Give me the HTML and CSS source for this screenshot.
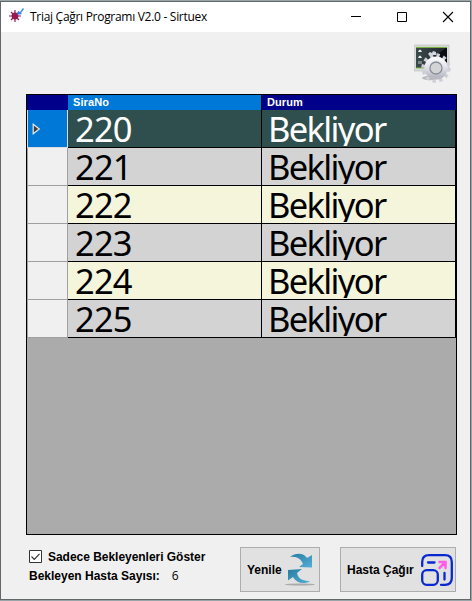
FILE: index.html
```html
<!DOCTYPE html>
<html lang="tr">
<head>
<meta charset="utf-8">
<title>Triaj Çağrı Programı V2.0 - Sirtuex</title>
<link rel="stylesheet" href="styles.css">
</head>
<body>
<main class="window">
  <header class="titlebar">
    <svg class="app-icon" width="16" height="16" viewBox="0 0 16 16">
      <g stroke="#9b174f" stroke-width="1.2"><path d="M6 3v12M0 9h12M2 5l8 8M2 13l8-8"/></g>
      <circle cx="6" cy="9" r="3.4" fill="#9b174f"/>
      <path d="M8 8l1-4 2 1 3-4 1 1-3 4 1 1z" fill="#2e8be8"/>
    </svg>
    <span class="title">Triaj Çağrı Programı V2.0 - Sirtuex</span>
    <div class="controls">
      <svg width="12" height="12" viewBox="0 0 12 12"><path d="M1 5.5h10" stroke="#000"/></svg>
      <svg width="12" height="12" viewBox="0 0 12 12"><path d="M1.5 1.5h9v9h-9z" fill="none" stroke="#000"/></svg>
      <svg width="12" height="12" viewBox="0 0 12 12"><path d="M1 1l10 10M11 1L1 11" stroke="#000" stroke-width="1.1"/></svg>
    </div>
  </header>
  <div class="toolbar">
    <svg width="40" height="40" viewBox="0 0 40 40">
      <defs>
        <linearGradient id="metal" x1="0" y1="0" x2="0" y2="1"><stop offset="0" stop-color="#f8f8fb"/><stop offset=".55" stop-color="#dcdce4"/><stop offset="1" stop-color="#b9b9c4"/></linearGradient>
        <linearGradient id="screen" x1="0" y1="0" x2="1" y2="0"><stop offset="0" stop-color="#3b4a4b"/><stop offset="1" stop-color="#20262e"/></linearGradient>
      </defs>
      <ellipse cx="16" cy="34" rx="8" ry="2.2" fill="#b9b9b9"/>
      <path d="M0 1h35v26H0z" fill="#d9dadb" stroke="#bfc1c3" stroke-width=".7"/>
      <path d="M2 3h31v21H2z" fill="url(#screen)"/>
      <path d="M33 3v19L20 13z" fill="#080d12"/>
      <path d="M2 3.4h31M2 24h31" stroke="#83bd45"/>
      <path d="M4 8q2-5 4 0zM4 14q2-5 4 0z" fill="#eee"/><path d="M4 17h4v3H4z" fill="#7d8687"/>
      <path d="M14 10l2-2 2 1 1-2 3 1v3h-7z" fill="#d4d8dd"/>
      <circle cx="22" cy="24" r="6" fill="#d2d4d6"/>
      <circle cx="22" cy="24" r="12.7" fill="none" stroke="#cfcfd8" stroke-width="4" stroke-dasharray="3.3 3.35"/>
      <circle cx="22" cy="24" r="8.7" fill="none" stroke="url(#metal)" stroke-width="5.8"/>
      <circle cx="22" cy="24" r="6" fill="none" stroke="#8b8f99" stroke-width="1.3"/>
    </svg>
  </div>
  <section class="grid">
    <div class="row head"><span class="corner"></span><span class="sorted">SiraNo</span><span>Durum</span></div>
    <div class="row selected"><span class="handle"><svg width="9" height="12" viewBox="0 0 9 12"><path d="M1.2 1.2v9.6L7.3 6z" fill="#404040" stroke="#e8e8e8" stroke-width="1.2"/></svg></span><span class="cell">220</span><span class="cell status">Bekliyor</span></div>
    <div class="row"><span class="handle"></span><span class="cell">221</span><span class="cell status">Bekliyor</span></div>
    <div class="row alt"><span class="handle"></span><span class="cell">222</span><span class="cell status">Bekliyor</span></div>
    <div class="row"><span class="handle"></span><span class="cell">223</span><span class="cell status">Bekliyor</span></div>
    <div class="row alt"><span class="handle"></span><span class="cell">224</span><span class="cell status">Bekliyor</span></div>
    <div class="row"><span class="handle"></span><span class="cell">225</span><span class="cell status">Bekliyor</span></div>
  </section>
  <footer class="footer">
    <div class="info">
      <div class="check"><svg width="13" height="13" viewBox="0 0 13 13"><path d="M.5.5h12v12H.5z" fill="#fff" stroke="#333"/><path d="M2.5 6.5l2.8 2.8 5.2-5.5" fill="none" stroke="#333" stroke-width="1.2"/></svg><span class="check-label">Sadece Bekleyenleri Göster</span></div>
      <div class="count"><span class="count-label">Bekleyen Hasta Sayısı:</span><span class="number">6</span></div>
    </div>
    <div class="button refresh"><span class="refresh-label">Yenile</span>
      <svg width="32" height="34" viewBox="0 0 32 34">
        <defs><linearGradient id="blue" x1="0" y1="0" x2="1" y2="1"><stop offset="0" stop-color="#277da3"/><stop offset="1" stop-color="#55aed5"/></linearGradient></defs>
        <ellipse cx="16" cy="31.5" rx="15" ry="1" fill="#aaa"/>
        <path d="M6 4C12-1 20 0 23 5l5-3v12.500L15 14l4-3C17 6 13 3 6 4z" fill="url(#blue)"/>
        <path d="M26 28c-5 4-14 2-17-4l-5 3.500V17l14-1-5 4c1 6 6 8 13 8z" fill="url(#blue)"/>
      </svg>
    </div>
    <div class="button call"><span class="call-label">Hasta Çağır</span>
      <svg width="32" height="32" viewBox="0 0 32 32" fill="none" stroke="#0829d0" stroke-width="2.3" stroke-linecap="round">
        <path d="M1.200 12V8Q1.200 1.200 8 1.200h16q6.800 0 6.800 6.800v16q0 6.800-6.800 6.800h-4"/>
        <rect x="1.2" y="16.2" width="15.6" height="14.6" rx="4.5"/>
        <path d="M7 8.500h6.500M23.500 19v6.500"/>
        <path d="M18.500 14l5.500-5.500M18.500 8h6v6" stroke="#ff5ce8" stroke-width="2.5"/>
      </svg>
    </div>
  </footer>
</main>
</body>
</html>
```
FILE: styles.css
```css
* { box-sizing: border-box; }
body { margin: 0; padding: 1px 1px 1px 0; width: 472px; height: 601px; background: #9aa5a9; overflow: hidden; font-family: "Liberation Sans", sans-serif; color: #000; }
svg { display: block; flex: none; }
.window { width: 471px; height: 599px; border: 1px solid #62676a; background: #f0f0f0; }
.titlebar { height: 30px; background: #fff; display: flex; align-items: center; padding: 0 16px 0 8px; }
.app-icon { margin-top: -4px; }
.title { font: 12px/16px "Open Sans", sans-serif; letter-spacing: -.29px; margin-left: 5px; white-space: nowrap; }
.controls { margin-left: auto; display: flex; gap: 34px; }
.toolbar { height: 62px; display: flex; justify-content: flex-end; padding: 12px 16px 0 0; }
.grid { margin-left: 25px; width: 431px; height: 441px; border: 1px solid #000; background: #ababab; }
.row { display: grid; grid-template-columns: 41px 194px 194px; height: 38px; background: #d3d3d3; }
.head { height: 15px; background: #00008b; color: #fff; font: bold 11px/15px "Liberation Sans", sans-serif; letter-spacing: .1px; }
.head span { padding-left: 5px; }
.head .sorted { background: #0078d7; border-right: 1px solid #000; }
.alt { background: #f5f5dc; }
.selected { background: #2f4f4f; color: #fff; }
.handle { display: flex; align-items: center; padding-left: 4px; background: #f0f0f0; border-left: 1px solid #a0a0a0; border-right: 1px solid #a0a0a0; border-bottom: 1px solid #a0a0a0; }
.selected .handle { background: #0078d7; border-color: #dcdcdc; }
.cell { border-right: 1px solid #000; border-bottom: 1px solid #000; padding: 1px 0 1px 7px; font: 34.5px/36px "Noto Sans", sans-serif; letter-spacing: -.8px; height: 38px; overflow: clip; overflow-clip-margin: content-box; white-space: nowrap; }
.status { letter-spacing: -1.65px; padding-left: 6px; }
.footer { display: flex; padding: 12px 0 0 28px; font-size: 12px; font-weight: bold; }
.info { width: 211px; white-space: nowrap; }
.check, .count { display: flex; align-items: center; height: 19px; }
.check-label { margin-left: 6px; letter-spacing: -.03px; }
.number { font: 12px "Open Sans", sans-serif; margin-left: 12px; }
.button { height: 45px; border: 1px solid #adadad; background: #e1e1e1; display: flex; align-items: center; justify-content: space-between; white-space: nowrap; }
.refresh { width: 80px; padding: 0 3px 0 6px; }
.call { width: 116px; margin-left: 20px; padding: 0 2px 0 6px; }
```
